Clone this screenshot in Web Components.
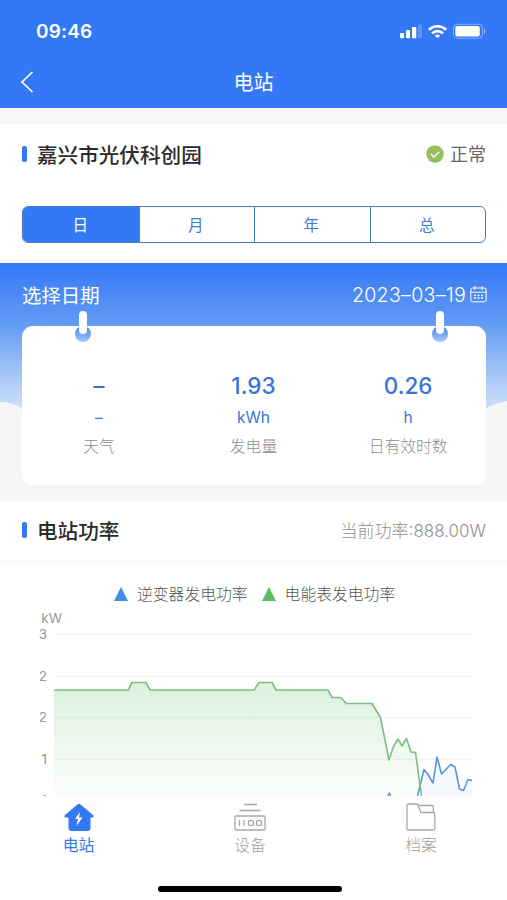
<!DOCTYPE html>
<html lang="zh-CN">
<head>
<meta charset="utf-8">
<meta name="viewport" content="width=device-width, initial-scale=1">
<title>电站</title>
<style>
  body {
    margin: 0;
    background: #fff;
    color: #333;
    font-family: Inter, "Noto Sans CJK SC", sans-serif;
    overflow: hidden;
  }
</style>
</head>
<body>
<station-app>
  <app-header slot="header" time="09:46">电站</app-header>

  <section-title slot="station">嘉兴市光伏科创园
    <status-badge slot="extra">正常</status-badge>
  </section-title>
  <segment-control slot="station" items="日,月,年,总" active="0"></segment-control>

  <day-summary slot="summary" date="2023–03–19">
    <stat-item value="–" unit="–">天气</stat-item>
    <stat-item value="1.93" unit="kWh">发电量</stat-item>
    <stat-item value="0.26" unit="h">日有效时数</stat-item>
  </day-summary>

  <section-title slot="power" class="power">电站功率
    <span slot="extra">当前功率:888.00W</span>
  </section-title>
  <power-chart slot="power"></power-chart>

  <tab-bar slot="tabs"></tab-bar>
</station-app>

<script>
  function attach(el, html) {
    const shadow = el.attachShadow({ mode: 'open' });
    shadow.innerHTML = html;
    return shadow;
  }

  class StationApp extends HTMLElement {
    constructor() {
      super();
      attach(this, `
        <style>
          :host {
            display: flex;
            flex-direction: column;
            width: 507px;
            height: 900px;
            overflow: hidden;
          }
          .station {
            height: 139px;
            border-top: 16px solid #f7f7f7;
            box-sizing: content-box;
          }
          .power { height: 295px; }
          ::slotted(section-title) { height: 61px; }
          ::slotted(section-title.power) { border-bottom: 1px solid #f8f8f8; height: 60px; }
          ::slotted(segment-control) { margin: 21px 21px 0 22px; }
        </style>
        <slot name="header"></slot>
        <div class="station"><slot name="station"></slot></div>
        <slot name="summary"></slot>
        <div class="power"><slot name="power"></slot></div>
        <slot name="tabs"></slot>
      `);
    }
  }

  class AppHeader extends HTMLElement {
    constructor() {
      super();
      attach(this, `
        <style>
          :host {
            display: block;
            height: 108px;
            background: #3478f6;
            color: #fff;
          }
          .status {
            display: flex;
            justify-content: space-between;
            height: 56px;
            padding: 0 21px 0 36px;
          }
          .time {
            font-size: 19px;
            font-weight: 600;
            line-height: 63px;
            letter-spacing: 0.15px;
          }
          .nav {
            display: grid;
            grid-template-columns: 60px 1fr 60px;
            align-items: center;
            height: 52px;
          }
          .nav svg { margin-left: 20px; }
          .title {
            font-size: 20px;
            line-height: 50px;
            padding-top: 2px;
            text-align: center;
          }
        </style>
        <div class="status">
          <span class="time">${this.getAttribute('time')}</span>
          <svg width="88" height="56" viewBox="0 0 88 56">
            <g fill="#fff">
              <rect x="2" y="33" width="4" height="5.2" rx="1"/>
              <rect x="8" y="30" width="4" height="8.2" rx="1"/>
              <rect x="14" y="27" width="4.3" height="11.2" rx="1"/>
              <rect x="20" y="24.500" width="4" height="13.700" rx="1" opacity=".2"/>
            </g>
            <g fill="none" stroke="#fff" stroke-width="2.700">
              <path d="M30.800 29.800c5-4.700 12.400-4.700 17.400 0"/>
              <path d="M34 33.300c3.200-2.900 7.800-2.900 11 0"/>
            </g>
            <path d="M39.500 38.300l-2.700-2.700c1.500-1.400 3.900-1.400 5.400 0z" fill="#fff"/>
            <rect x="55.500" y="24.300" width="29" height="14" rx="4" fill="none" stroke="#fff" opacity=".4"/>
            <rect x="57.300" y="26" width="24.500" height="10.600" rx="2.300" fill="#fff"/>
            <path d="M86 29v5c2-.8 2-4.200 0-5z" fill="#fff" opacity=".5"/>
          </svg>
        </div>
        <div class="nav">
          <svg width="16" height="24" viewBox="0 0 16 24">
            <path d="M12.500 2L2 12l10.500 10" fill="none" stroke="#fff" stroke-width="1.700"/>
          </svg>
          <span class="title"><slot></slot></span>
        </div>
      `);
    }
  }

  class SectionTitle extends HTMLElement {
    constructor() {
      super();
      attach(this, `
        <style>
          :host {
            display: flex;
            align-items: center;
            justify-content: space-between;
            padding: 0 21px 0 22px;
            font-size: 20.600px;
            font-weight: 500;
            color: #2b2b2b;
          }
          .name { display: flex; align-items: center; gap: 10px; line-height: 30px; white-space: nowrap; }
          .name span { padding-top: 2px; }
          i { width: 5px; height: 16px; margin-bottom: 2px; border-radius: 2px; background: #3478f6; }
          ::slotted([slot=extra]) {
            font-size: 17px;
            font-weight: 300;
            color: #8f8f8f;
            line-height: 26px;
            padding-bottom: 1px;
          }
        </style>
        <div class="name"><i></i><span><slot></slot></span></div>
        <slot name="extra"></slot>
      `);
    }
  }

  class StatusBadge extends HTMLElement {
    constructor() {
      super();
      attach(this, `
        <style>
          :host { display: flex; align-items: center; gap: 6px; line-height: 26px; }
          span { padding-top: 1px; color: #666; font-size: 18px; font-weight: 400; }
        </style>
        <svg width="18" height="18" viewBox="0 0 18 18">
          <circle cx="9" cy="9" r="8.700" fill="#95bd5b"/>
          <path d="M5 9l3 3 5.200-5.200" fill="none" stroke="#fff" stroke-width="1.300"/>
        </svg>
        <span><slot></slot></span>
      `);
    }
  }

  class SegmentControl extends HTMLElement {
    constructor() {
      super();
      const active = Number(this.getAttribute('active'));
      const items = this.getAttribute('items').split(',')
        .map((t, i) => `<span class="${i === active ? 'on' : ''}">${t}</span>`).join('');
      attach(this, `
        <style>
          :host {
            display: grid;
            grid-template-columns: repeat(4, 1fr);
            height: 37px;
            box-sizing: border-box;
            border: 1.500px solid #4580c4;
            border-radius: 6px;
            overflow: hidden;
          }
          span {
            padding: 1px 2px 0 0;
            font-size: 15.500px;
            line-height: 36px;
            text-align: center;
            color: #3b7cd6;
            border-left: 1.500px solid #4580c4;
          }
          span:first-child { border-left: 0; }
          .on { background: #3478f6; color: #fff; }
        </style>
        ${items}
      `);
    }
  }

  class DaySummary extends HTMLElement {
    constructor() {
      super();
      attach(this, `
        <style>
          :host {
            display: block;
            position: relative;
            height: 238px;
            background: linear-gradient(#3478f6 0, #649df4 63px, #a3c5f7 110px, #d0e1f8 147px);
          }
          .clouds { position: absolute; left: 0; bottom: 0; }
          .date {
            position: relative;
            display: flex;
            justify-content: space-between;
            align-items: center;
            height: 63px;
            padding: 0 20px 0 22px;
            color: #fff;
            font-size: 19.400px;
            font-weight: 400;
          }
          .date span { display: flex; align-items: center; gap: 4px; font-size: 19.600px; font-weight: 300; letter-spacing: .3px; }
          .card {
            position: relative;
            display: grid;
            grid-template-columns: repeat(3, 1fr);
            height: 159px;
            margin: 0 21px 0 22px;
            border-radius: 11px;
            background: #fff;
          }
          /* calendar rings hanging over the card edge */
          .ring {
            position: absolute;
            top: 0;
            width: 16px;
            height: 16px;
            border-radius: 50%;
            background: linear-gradient(#3f81f0, #a5c8f8);
          }
          .ring::after {
            content: "";
            position: absolute;
            left: 4px;
            top: -15px;
            width: 8px;
            height: 23px;
            border-radius: 4px;
            background: #fff;
          }
          .left { left: 53px; }
          .right { right: 38px; }
        </style>
        <svg class="clouds" width="507" height="102" viewBox="0 0 507 102">
          <path d="M0 3C10 3 17 6 22 10H486C492 5 499 4 507 2V102H0z" fill="#f6f6f6"/>
        </svg>
        <div class="date">选择日期
          <span>${this.getAttribute('date')}
            <svg width="17" height="17" viewBox="0 0 17 17" fill="none" stroke="#fff">
              <rect x=".8" y="2" width="15.400" height="13.800" rx="1.800"/>
              <path d="M.8 6.200h15.400M4.800 0v4M12.200 0v4"/>
              <path d="M4 9.300h9.500M4 12h9.500" stroke-width="1.300" stroke-dasharray="2 1.500"/>
            </svg>
          </span>
        </div>
        <div class="card">
          <slot></slot>
          <i class="ring left"></i>
          <i class="ring right"></i>
        </div>
      `);
    }
  }

  class StatItem extends HTMLElement {
    constructor() {
      super();
      attach(this, `
        <style>
          :host {
            display: flex;
            flex-direction: column;
            align-items: center;
            padding: 43px 1px 0 0;
            color: #3974d8;
          }
          b { font-size: 22.500px; font-weight: 500; line-height: 34px; }
          .unit { font-size: 15.500px; line-height: 30px; }
          .label { font-size: 15.800px; font-weight: 300; line-height: 28px; color: #8f8f8f; }
        </style>
        <b>${this.getAttribute('value')}</b>
        <span class="unit">${this.getAttribute('unit')}</span>
        <span class="label"><slot></slot></span>
      `);
    }
  }

  class PowerChart extends HTMLElement {
    constructor() {
      super();
      const meter = '54,80 128,80 132,72.500 146,72.500 150,80 254,80 259,72.500 272,72.500 276,80 328,80 332,87.500 341,87.500 346,93.500 372,93.500 380.500,107.500 389,150 393.500,136.500 398,129 402,136 406.500,128.500 411,142 415.500,142.500 421.500,186';
      const inverter = '417.500,186 424,159.500 428,164.500 433,173 437,147 441.500,164 450.500,154.500 455,157 459.500,179 463.500,180.500 468,169.500 472,170.500';
      const grid = [24.500, 66.500, 107.500, 149.500].map(y => `<path d="M54 ${y}H474"/>`).join('');
      const labels = [[3, 28.500], [2, 70.500], [2, 112], [1, 153.500], [1, 195]]
        .map(([t, y]) => `<text x="47" y="${y}">${t}</text>`).join('');
      attach(this, `
        <style>
          :host { display: block; }
          .legend {
            display: flex;
            gap: 14px;
            height: 48px;
            padding: 9px 0 0 114px;
            box-sizing: border-box;
            align-items: flex-start;
            font-size: 15.800px;
            line-height: 48px;
            color: #555;
          }
          .legend span { display: flex; align-items: center; gap: 9px; font-weight: 300; }
          .legend svg { margin-bottom: 2px; }
          .plot { display: block; overflow: hidden; }
          text { font-size: 13.500px; fill: #999; text-anchor: end; }
        </style>
        <div class="legend">
          <span><svg width="14" height="14"><path d="M7 0l7 14H0z" fill="#408cec"/></svg>逆变器发电功率</span>
          <span><svg width="14" height="14"><path d="M7 0l7 14H0z" fill="#5cbe62"/></svg>电能表发电功率</span>
        </div>
        <svg class="plot" width="507" height="186" viewBox="0 0 507 186">
          <defs>
            <linearGradient id="green" x1="0" y1="72" x2="0" y2="186" gradientUnits="userSpaceOnUse">
              <stop offset="0" stop-color="#5cbe62" stop-opacity=".22"/>
              <stop offset="1" stop-color="#5cbe62" stop-opacity=".02"/>
            </linearGradient>
          </defs>
          <g stroke="#f3f3f3" stroke-width="1.300">${grid}</g>
          <text x="62" y="12.500">kW</text>
          ${labels}
          <polygon points="54,186 ${meter}" fill="url(#green)"/>
          <polygon points="${inverter} 472,186" fill="#408cec" fill-opacity=".05"/>
          <g fill="none" stroke-width="1.600" stroke-linejoin="round">
            <polyline points="${inverter}" stroke="#5796db"/>
            <path d="M387.500 187l1.800-4 1.800 4" stroke="#5796db"/>
            <polyline points="${meter}" stroke="#7bbf82"/>
          </g>
        </svg>
      `);
    }
  }

  class TabBar extends HTMLElement {
    constructor() {
      super();
      attach(this, `
        <style>
          :host { display: block; height: 104px; background: #fff; }
          .tabs { display: grid; grid-template-columns: 157px 186px 156px; height: 88px; }
          .tab {
            display: flex;
            flex-direction: column;
            align-items: center;
            padding-top: 6px;
            font-size: 15.800px;
            font-weight: 300;
            line-height: 24px;
            color: #9f9f9f;
          }
          .on { color: #3478f6; font-weight: 400; }
          svg { display: block; margin-bottom: 2px; }
          .home { width: 184px; height: 6px; margin-left: 158px; border-radius: 3px; background: #000; }
        </style>
        <div class="tabs">
          <div class="tab on">
            <svg width="30" height="30" viewBox="0 0 30 30">
              <path d="M13.700 2.300q1.300-1 2.600 0L29.200 13.200q1.300 2-1 2.400H26.500V26q0 3-3 3h-16q-3 0-3-3V15.600H1.800q-2.300-.4-1-2.400z" fill="#3478f6"/>
              <path d="M16 10l-5 7h3l-1.500 7 6-8.500H15z" fill="#fff"/>
            </svg>
            <span>电站</span>
          </div>
          <div class="tab">
            <svg width="32" height="30" viewBox="0 0 32 30" fill="none" stroke="#a8a8a8" stroke-width="1.300">
              <path d="M10 2.500h13M5.500 8.500h21"/>
              <rect x="1" y="14" width="30" height="14" rx="1"/>
              <path d="M5.500 18v6M10 18v6"/>
              <circle cx="17" cy="21" r="2.600"/>
              <circle cx="25" cy="21" r="2.600"/>
            </svg>
            <span>设备</span>
          </div>
          <div class="tab">
            <svg width="30" height="30" viewBox="0 0 30 30" fill="none" stroke="#a8a8a8" stroke-width="1.300">
              <path d="M1 27V3.500q0-1.500 1.500-1.500h9l3.500 8.500h12.500q1.300 0 1.300 1.300V26.500q0 1.500-1.500 1.500H2q-1 0-1-1z"/>
              <path d="M12 3.500h14q1.300 0 1.300 1.300v5.500"/>
            </svg>
            <span>档案</span>
          </div>
        </div>
        <div style="padding-top:1.500px"><div class="home"></div></div>
      `);
    }
  }

  customElements.define('station-app', StationApp);
  customElements.define('app-header', AppHeader);
  customElements.define('section-title', SectionTitle);
  customElements.define('status-badge', StatusBadge);
  customElements.define('segment-control', SegmentControl);
  customElements.define('day-summary', DaySummary);
  customElements.define('stat-item', StatItem);
  customElements.define('power-chart', PowerChart);
  customElements.define('tab-bar', TabBar);
</script>
</body>
</html>
